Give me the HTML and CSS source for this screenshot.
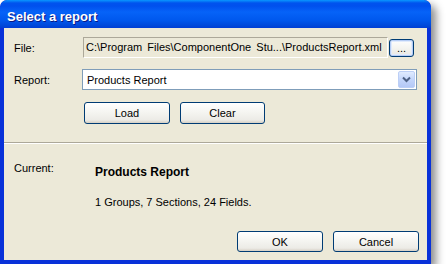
FILE: index.html
```html
<!DOCTYPE html>
<html>
<head>
<meta charset="utf-8">
<link rel="stylesheet" href="styles.css">
</head>
<body>
<div class="window">
  <div class="titlebar"><span class="title">Select a report</span></div>
  <div class="client">
    <div class="form">
      <div class="row row-file">
        <span class="label">File:</span>
        <div class="readonly">C:\Program Files\ComponentOne Stu...\ProductsReport.xml</div>
        <button class="btn btn-browse">...</button>
      </div>
      <div class="row row-report">
        <span class="label">Report:</span>
        <div class="combo">
          <span class="combo-text">Products Report</span>
          <span class="combo-btn">
            <svg width="9" height="7" viewBox="0 0 9 7"><path d="M1 1.5 L4.5 5 L8 1.5" fill="none" stroke="#4d6185" stroke-width="2"/></svg>
          </span>
        </div>
      </div>
      <div class="row row-actions">
        <button class="btn btn-load">Load</button>
        <button class="btn btn-clear">Clear</button>
      </div>
    </div>
    <div class="separator"></div>
    <div class="current">
      <span class="label">Current:</span>
      <div class="info">
        <div class="report-name">Products Report</div>
        <div class="report-stats">1 Groups, 7 Sections, 24 Fields.</div>
      </div>
    </div>
    <div class="footer">
      <button class="btn btn-ok">OK</button>
      <button class="btn btn-cancel">Cancel</button>
    </div>
  </div>
</div>
</body>
</html>
```

FILE: styles.css
```css
html, body {
  margin: 0;
  padding: 0;
  background: #ffffff;
}
body {
  font-family: "Liberation Sans", Arial, sans-serif;
  font-size: 11px;
  color: #000;
}
.window {
  width: 431px;
  height: 264px;
  box-sizing: border-box;
  display: flex;
  flex-direction: column;
  background: #0831d9;
  border-radius: 7px 7px 0 0;
  box-shadow: 5px 5px 8px rgba(0, 0, 0, 0.45);
  overflow: hidden;
}
.titlebar {
  height: 28px;
  flex: none;
  display: flex;
  align-items: center;
  padding-left: 7px;
  background: linear-gradient(to bottom, #0997ff 0px, #0053ee 3px, #0050ee 6px, #0663f8 12px, #0058ee 20px, #0047d8 26px, #003dd7 28px);
  border-radius: 7px 7px 0 0;
}
.title {
  color: #fff;
  font-family: "Liberation Sans", Arial, sans-serif;
  font-weight: bold;
  font-size: 13px;
  text-shadow: 1px 1px 0 #0a1883;
  margin-top: 4px;
}
.client {
  flex: 1;
  margin: 0 4px 4px 4px;
  background: #ece9d8;
  display: flex;
  flex-direction: column;
}
.form {
  padding: 9px 10px 0 10px;
  display: flex;
  flex-direction: column;
}
.row {
  display: flex;
  align-items: center;
}
.label {
  width: 69px;
  flex: none;
}
.row-file {
  height: 21px;
}
.readonly {
  width: 305px;
  height: 21px;
  box-sizing: border-box;
  border-top: 1px solid #aca899;
  border-left: 1px solid #aca899;
  border-right: 1px solid #fff;
  border-bottom: 1px solid #fff;
  padding-left: 2px;
  line-height: 19px;
  white-space: nowrap;
  overflow: hidden;
  word-spacing: 2px;
}
.btn {
  font-family: "Liberation Sans", Arial, sans-serif;
  font-size: 11px;
  color: #000;
  box-sizing: border-box;
  border: 1px solid #003c74;
  border-radius: 3px;
  background: linear-gradient(to bottom, #ffffff 0%, #f4f4f0 50%, #ecebe6 85%, #d6d0c5 100%);
  padding: 0;
  margin: 0;
}
.btn-browse {
  width: 25px;
  height: 18px;
  margin-left: 1px;
  line-height: 12px;
  box-shadow: inset 0 0 0 1px #b6cdf5, inset 0 0 0 2px #e1ebfc;
}
.row-report {
  margin-top: 11px;
  height: 21px;
}
.row-report .label {
  width: 68px;
}
.combo {
  width: 335px;
  height: 21px;
  box-sizing: border-box;
  border: 1px solid #7f9db9;
  background: #fff;
  display: flex;
  align-items: center;
  justify-content: space-between;
  padding: 1px;
}
.combo-text {
  padding-left: 3px;
}
.combo-btn {
  width: 17px;
  height: 17px;
  box-sizing: border-box;
  border: 1px solid #bccff6;
  border-radius: 2px;
  background: linear-gradient(to bottom, #e0ebff 0%, #c4d6fb 50%, #b4c8f6 100%);
  display: flex;
  align-items: center;
  justify-content: center;
}
.row-actions {
  margin-top: 12px;
  padding-left: 70px;
  gap: 10px;
}
.btn-load {
  width: 86px;
  height: 22px;
}
.btn-clear {
  width: 85px;
  height: 22px;
}
.separator {
  margin-top: 18px;
  height: 1px;
  background: #aca899;
  border-bottom: 1px solid #fff;
}
.current {
  display: flex;
  padding: 18px 10px 0 10px;
}
.current .label {
  width: 81px;
}
.info {
  display: flex;
  flex-direction: column;
  padding-top: 3px;
}
.report-name {
  font-weight: bold;
  font-size: 12px;
}
.report-stats {
  margin-top: 17px;
}
.footer {
  margin-top: auto;
  display: flex;
  justify-content: flex-end;
  gap: 10px;
  padding: 0 8px 8px 0;
}
.btn-ok, .btn-cancel {
  width: 86px;
  height: 21px;
}
```
